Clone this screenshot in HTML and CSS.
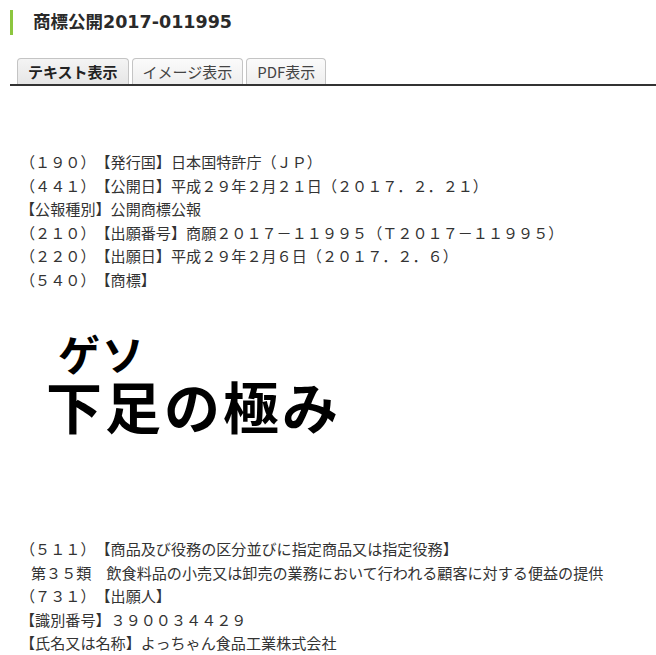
FILE: index.html
```html
<!DOCTYPE html>
<html lang="ja">
<head>
<meta charset="utf-8">
<link rel="stylesheet" href="styles.css">
</head>
<body>
<div class="page">
  <h1 class="title">商標公開2017-011995</h1>
  <div class="tabs">
    <span class="tab active">テキスト表示</span>
    <span class="tab">イメージ表示</span>
    <span class="tab">PDF表示</span>
  </div>
  <div class="doc">
    <div class="block">
      <div class="line">（１９０）【発行国】日本国特許庁（ＪＰ）</div>
      <div class="line">（４４１）【公開日】平成２９年２月２１日（２０１７．２．２１）</div>
      <div class="line">【公報種別】公開商標公報</div>
      <div class="line">（２１０）【出願番号】商願２０１７－１１９９５（Ｔ２０１７－１１９９５）</div>
      <div class="line">（２２０）【出願日】平成２９年２月６日（２０１７．２．６）</div>
      <div class="line">（５４０）【商標】</div>
    </div>
    <div class="mark">
      <div class="mark-ruby">ゲソ</div>
      <div class="mark-main">下足の極み</div>
    </div>
    <div class="block">
      <div class="line">（５１１）【商品及び役務の区分並びに指定商品又は指定役務】</div>
      <div class="line indent">第３５類　飲食料品の小売又は卸売の業務において行われる顧客に対する便益の提供</div>
      <div class="line">（７３１）【出願人】</div>
      <div class="line">【識別番号】３９００３４４２９</div>
      <div class="line">【氏名又は名称】よっちゃん食品工業株式会社</div>
    </div>
  </div>
</div>
</body>
</html>
```

FILE: styles.css
```css
html, body {
  margin: 0;
  padding: 0;
  background: #ffffff;
}

body {
  font-family: "Noto Sans CJK JP", "Noto Sans", sans-serif;
  color: #333333;
  overflow: hidden;
  text-spacing-trim: space-all;
}

.page {
  width: 656px;
  height: 655px;
  overflow: hidden;
}

.title {
  margin: 10px 0 0 10px;
  padding-left: 20px;
  border-left: 3px solid #8cc63f;
  height: 25px;
  line-height: 25px;
  font-size: 17.5px;
  font-weight: bold;
  color: #2a2a2a;
  font-family: "DejaVu Sans", "Noto Sans CJK JP", sans-serif;
}

.tabs {
  margin: 23px 0 0 10px;
  padding-left: 7px;
  display: flex;
  align-items: flex-end;
  gap: 3px;
  border-bottom: 2px solid #333333;
}

.tab {
  display: block;
  height: 25px;
  line-height: 25px;
  padding: 0 10px;
  font-size: 15px;
  color: #444444;
  background: linear-gradient(#fbfbfb, #eeeeee);
  border: 1px solid #c4c4c4;
  border-bottom: none;
  border-radius: 4px 4px 0 0;
}

.tab.active {
  font-weight: bold;
  color: #222222;
  background: linear-gradient(#f4f4f4, #e6e6e6);
}

.doc {
  padding: 64px 0 0 20px;
}

.line {
  font-size: 15.1px;
  line-height: 23.5px;
  height: 23.5px;
  white-space: nowrap;
}

.indent {
  padding-left: 11px;
}

.mark {
  height: 246px;
  box-sizing: border-box;
  padding-top: 41px;
  color: #000000;
  font-weight: bold;
}

.mark-ruby {
  font-size: 42px;
  line-height: 42px;
  margin-left: 38px;
  letter-spacing: 2px;
}

.mark-main {
  margin-top: 3px;
  font-size: 56px;
  line-height: 56px;
  margin-left: 26px;
  letter-spacing: 3px;
}
```
